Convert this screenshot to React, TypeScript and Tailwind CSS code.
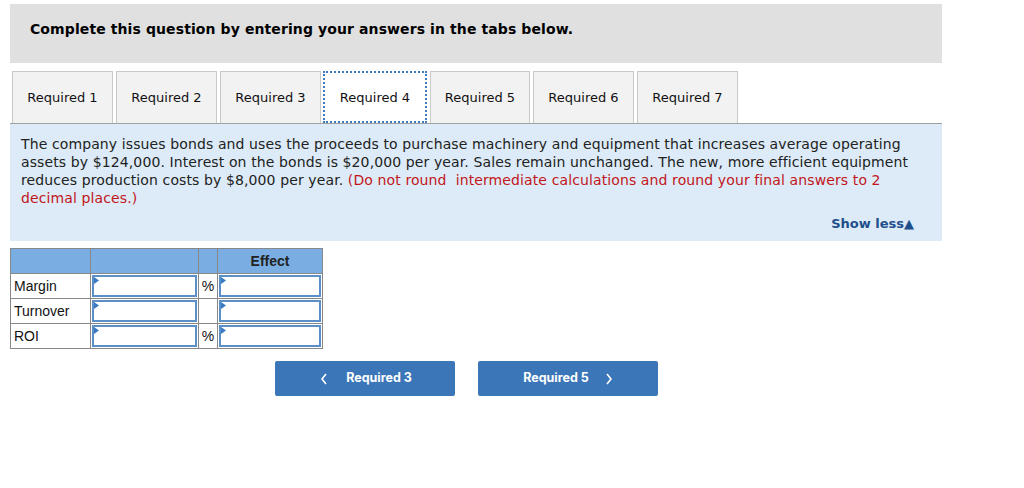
import React from "react";

const tabs = ["Required 1", "Required 2", "Required 3", "Required 4", "Required 5", "Required 6", "Required 7"];

function Corner() {
  return (
    <svg className="absolute left-0 top-0" width="6" height="8" viewBox="0 0 6 8">
      <polygon points="0,0 5,3.5 0,7" fill="#3b7bc4" />
    </svg>
  );
}

function InputCell() {
  return (
    <td className="p-0 border border-[#888] bg-white">
      <div className="relative h-[22px] m-[1px] border-2 border-[#5b8fc7] bg-white">
        <Corner />
      </div>
    </td>
  );
}

export default function App() {
  const verdana = { fontFamily: "'DejaVu Sans', Verdana, sans-serif" };
  return (
    <div className="w-[1024px] h-[488px] bg-white relative" style={verdana}>
      <div className="pt-[4px] pl-[10px] w-[942px]">
        <div className="bg-[#e0e0e0] h-[59px] flex items-center pl-[20px] pb-[8px]">
          <span className="font-bold text-[14px] text-black tracking-[0.1px]">Complete this question by entering your answers in the tabs below.</span>
        </div>
        <div className="flex gap-[3px] mt-[8px] pl-[2px] h-[52px] items-stretch">
          {tabs.map((t, i) =>
            i === 3 ? (
              <div key={t} className="w-[104px] -ml-[1px] bg-white border-2 border-dotted border-[#3b7bc4] flex items-center justify-center text-[13px] text-[#111] pt-[2px]">
                {t}
              </div>
            ) : (
              <div key={t} className={`${i === 4 ? "w-[100px]" : "w-[101px]"} bg-[#f2f2f2] border border-[#c8c8c8] border-b-0 flex items-center justify-center text-[13px] text-[#111] pt-[1px]`}>
                {t}
              </div>
            )
          )}
        </div>
        <div className="bg-[#dcebf7] border-t border-[#a0a0a0] h-[118px] pt-[11px] pl-[11px] pr-[22px] relative">
          <p className="text-[14px] leading-[18px] text-[#222] tracking-[0.11px]">
            The company issues bonds and uses the proceeds to purchase machinery and equipment that increases average operating assets by $124,000. Interest on the bonds is $20,000 per year. Sales remain unchanged. The new, more efficient equipment reduces production costs by $8,000 per year.{" "}
            <span className="text-[#c3161c]">(Do not round&nbsp; intermediate calculations and round your final answers to 2 decimal places.)</span>
          </p>
          <div className="absolute right-[28px] bottom-[8px] text-[13px] font-bold text-[#1f4e8c]">Show less▲</div>
        </div>
      </div>
      <div className="pl-[10px] mt-[7px]">
        <table className="border-collapse text-[14px]" style={{ fontFamily: "'Liberation Sans', Arial, sans-serif" }}>
          <tbody>
            <tr className="h-[25px] bg-[#7aaee3]">
              <td className="w-[80px] border border-[#888]"></td>
              <td className="w-[108px] border border-[#888]"></td>
              <td className="w-[19px] border border-[#888]"></td>
              <td className="w-[105px] border border-[#888] text-center font-bold text-[#222]">Effect</td>
            </tr>
            {[["Margin", "%"], ["Turnover", ""], ["ROI", "%"]].map(([l, p]) => (
              <tr key={l} className="h-[25px]">
                <td className="border border-[#888] pl-[3px] text-[#111]">{l}</td>
                <InputCell />
                <td className="border border-[#888] text-center text-[#111] px-0">{p}</td>
                <InputCell />
              </tr>
            ))}
          </tbody>
        </table>
      </div>
      <div className="flex gap-[23px] pl-[275px] mt-[12px]" style={{ fontFamily: "Inter, sans-serif" }}>
        <button className="w-[180px] h-[35px] bg-[#3a76b8] rounded-[2px] text-white text-[12.5px] font-bold flex items-center justify-center gap-[18px] pl-[2px]">
          <svg width="8" height="12" viewBox="0 0 8 12"><polyline points="6,1 2,6 6,11" fill="none" stroke="white" strokeWidth="1.6" /></svg>
          <span>Required 3</span>
        </button>
        <button className="w-[180px] h-[35px] bg-[#3a76b8] rounded-[2px] text-white text-[12.5px] font-bold flex items-center justify-center gap-[16px]">
          <span>Required 5</span>
          <svg width="8" height="12" viewBox="0 0 8 12"><polyline points="2,1 6,6 2,11" fill="none" stroke="white" strokeWidth="1.6" /></svg>
        </button>
      </div>
    </div>
  );
}
